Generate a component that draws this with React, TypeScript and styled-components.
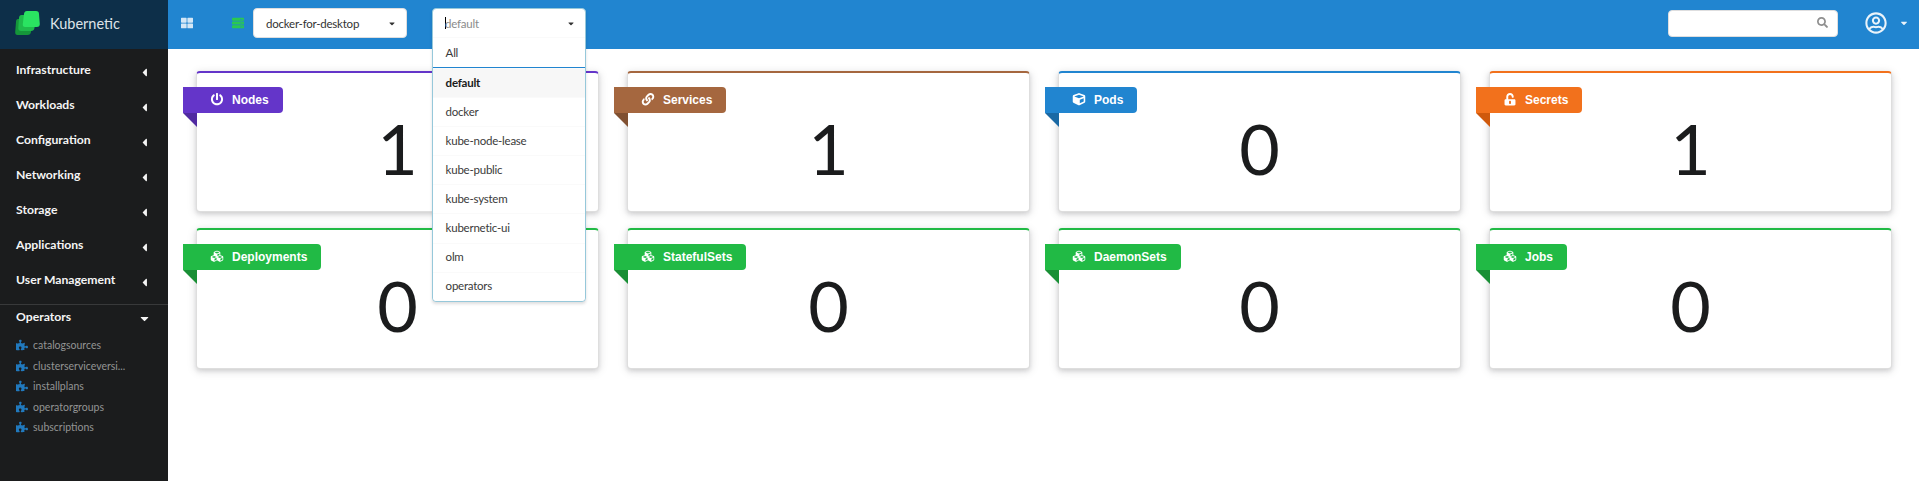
import React from 'react';
import styled, { createGlobalStyle } from 'styled-components';
import type { IconType } from 'react-icons';
import {
  FaCaretDown, FaCaretLeft, FaCube, FaCubes, FaLink, FaPowerOff, FaPuzzlePiece,
  FaRegUserCircle, FaSearch, FaServer, FaThLarge, FaUnlockAlt,
} from 'react-icons/fa';

const Global = createGlobalStyle`
  *, *::before, *::after { box-sizing: border-box; }
  body { margin: 0; background: #fff; font-family: Lato, "Liberation Sans", sans-serif; }
`;

const Page = styled.div`
  display: flex;
  height: 481px;
  overflow: hidden;
`;

const Sidebar = styled.nav`
  flex: none;
  width: 168px;
  background: #1b1c1d;
  color: #f4f4f4;
`;

const Brand = styled.div`
  display: flex;
  align-items: center;
  gap: 9px;
  height: 49px;
  padding: 0 0 3px 14px;
  background: #0d2f49;
  color: #dde3e8;
  font-size: 14.5px;
`;

const Sections = styled.div`
  height: 251px;
  padding-top: 4px;
  border-bottom: 1px solid #38393a;
  box-sizing: content-box;
`;

const SectionRow = styled.div<{ $open?: boolean }>`
  display: flex;
  align-items: center;
  justify-content: space-between;
  height: ${(p) => (p.$open ? '22px' : '35px')};
  padding: 0 19px ${(p) => (p.$open ? '0' : '3px')} 16px;
  font-size: 12.2px;
  font-weight: 700;

  svg {
    width: ${(p) => (p.$open ? '9px' : '13px')};
    height: 13px;
    margin: ${(p) => (p.$open ? '5px 0 0' : '7px -2px 0 0')};
  }
`;

const SubItem = styled.div`
  display: flex;
  align-items: center;
  gap: 5px;
  height: 20.5px;
  padding-left: 16px;
  color: #939494;
  font-size: 10.5px;

  svg { color: #2179bd; width: 12px; height: 12px; }
`;

const SubList = styled.div`
  padding-top: 8px;
`;

const Main = styled.main`
  flex: 1;
  min-width: 0;
`;

const Topbar = styled.header`
  display: flex;
  align-items: flex-start;
  height: 49px;
  padding-left: 13px;
  background: #2185d0;
`;

const BarIcon = styled.span<{ $color: string; $gap: number }>`
  display: flex;
  margin: 17px ${(p) => p.$gap}px 0 0;
  color: ${(p) => p.$color};
`;

const Select = styled.div<{ $open?: boolean }>`
  flex: none;
  position: relative;
  z-index: 2;
  width: 154px;
  height: ${(p) => (p.$open ? '294px' : '30px')};
  margin: 8px 25px 0 0;
  border: 1px solid ${(p) => (p.$open ? '#96c8da' : '#dededf')};
  border-radius: 4px;
  background: #fff;
  box-shadow: ${(p) => (p.$open ? '0 2px 3px rgba(34,36,38,.15)' : 'none')};
  color: rgba(0, 0, 0, .87);
  font-size: 11.5px;
  letter-spacing: -0.23px;
`;

const SelectValue = styled.div<{ $muted?: boolean }>`
  display: flex;
  align-items: center;
  justify-content: space-between;
  height: 28px;
  padding: 0 9px 0 12px;
  color: ${(p) => (p.$muted ? '#8b8b8b' : '#333')};

  svg { color: #333; width: 10px; height: 9px; }
`;

const Caret = styled.span`
  width: 1px;
  height: 12px;
  margin-right: -1px;
  background: #000;
`;

const ValueText = styled.span`
  flex: 1;
`;

const Option = styled.div<{ $selected?: boolean; $first?: boolean }>`
  display: flex;
  align-items: center;
  height: ${(p) => (p.$first ? '31px' : '29.1px')};
  padding: 0 12px ${(p) => (p.$first ? '0' : '2px')} 12.6px;
  border-top: 1px solid #fafafa;
  border-bottom: ${(p) => (p.$first ? '1px solid #2185d0' : '0')};
  background: ${(p) => (p.$selected ? '#f7f7f7' : '#fff')};
  color: ${(p) => (p.$selected ? '#1b1b1b' : '#3a3a3a')};
  font-weight: ${(p) => (p.$selected ? 700 : 400)};

  &:last-child { border-radius: 0 0 4px 4px; }
`;

const Tools = styled.div`
  display: flex;
  align-items: center;
  height: 47px;
  margin-left: auto;
  padding-right: 10px;
  color: #e9f3fa;
`;

const SearchBox = styled.div`
  display: flex;
  align-items: center;
  justify-content: flex-end;
  width: 170px;
  height: 27px;
  margin-right: 27px;
  padding: 0 9px 2px 0;
  border: 1px solid #dededf;
  border-radius: 4px;
  background: #fff;
  color: #8f8f8f;
`;

const UserMenu = styled.span`
  display: flex;
  align-items: center;
  gap: 12px;
  padding-bottom: 2px;
`;

const Grid = styled.div`
  display: grid;
  grid-template-columns: repeat(4, 1fr);
  gap: 16px 28px;
  padding: 22px 27px 0 28px;
`;

const Card = styled.section<{ $color: string }>`
  height: 141px;
  border: 1px solid rgba(34, 36, 38, .15);
  border-top: 2px solid ${(p) => p.$color};
  border-radius: 4px;
  background: #fff;
  box-shadow: 0 2px 4px rgba(34, 36, 38, .12), 0 2px 10px rgba(34, 36, 38, .15);
`;

const Ribbon = styled.div<{ $color: string; $fold: string }>`
  position: relative;
  display: flex;
  align-items: center;
  width: max-content;
  height: 26px;
  margin: 14px 0 0 -14px;
  padding: 0 14px 1px 27px;
  border-radius: 0 4px 4px 0;
  background: ${(p) => p.$color};
  color: #fff;
  font: 700 12px "Liberation Sans", Arial, sans-serif;

  svg { width: 14px; height: 12.5px; margin-right: 8px; }

  &::after {
    content: '';
    position: absolute;
    top: 100%;
    left: 0;
    border-style: solid;
    border-width: 0 14px 14px 0;
    border-color: transparent ${(p) => p.$fold} transparent transparent;
  }
`;

const Count = styled.div`
  color: #1b1c1d;
  font-size: 70px;
  line-height: 70px;
  text-align: center;
`;

const Logo = () => (
  <svg width="27" height="27" viewBox="0 0 27 27">
    <path d="M4 9h11q3 0 3 3l-1 10q-.5 3-3.500 3H3.500Q1 25 1.200 22L2 12q0-3 2-3Z" fill="#15963a" />
    <path d="M7.500 5h11q3 0 3 3l-1 10q-.5 3-3.500 3H7Q4.200 21 4.300 18L5 8q.2-3 2.500-3Z" fill="#1fba4b" />
    <path d="M13 1h9q3 0 3 3l.8 10q0 3-3 3H11q-2.500 0-2.200-3L10 4q.3-3 3-3Z" fill="#2ae361" />
  </svg>
);

const sections = ['Infrastructure', 'Workloads', 'Configuration', 'Networking', 'Storage', 'Applications', 'User Management'];
const operators = ['catalogsources', 'clusterserviceversi...', 'installplans', 'operatorgroups', 'subscriptions'];
const namespaces = ['All', 'default', 'docker', 'kube-node-lease', 'kube-public', 'kube-system', 'kubernetic-ui', 'olm', 'operators'];

interface Stat { name: string; count: number; color: string; fold: string; icon: IconType }

const stats: Stat[] = [
  { name: 'Nodes', count: 1, color: '#6435c9', fold: '#502aa1', icon: FaPowerOff },
  { name: 'Services', count: 1, color: '#a5673f', fold: '#805031', icon: FaLink },
  { name: 'Pods', count: 0, color: '#2185d0', fold: '#1a69a4', icon: FaCube },
  { name: 'Secrets', count: 1, color: '#f2711c', fold: '#cf590c', icon: FaUnlockAlt },
  { name: 'Deployments', count: 0, color: '#21ba45', fold: '#198f35', icon: FaCubes },
  { name: 'StatefulSets', count: 0, color: '#21ba45', fold: '#198f35', icon: FaCubes },
  { name: 'DaemonSets', count: 0, color: '#21ba45', fold: '#198f35', icon: FaCubes },
  { name: 'Jobs', count: 0, color: '#21ba45', fold: '#198f35', icon: FaCubes },
];

export default function App() {
  return (
    <Page>
      <Global />
      <Sidebar>
        <Brand><Logo />Kubernetic</Brand>
        <Sections>
          {sections.map((s) => <SectionRow key={s}>{s}<FaCaretLeft /></SectionRow>)}
        </Sections>
        <SectionRow $open>Operators<FaCaretDown /></SectionRow>
        <SubList>
          {operators.map((o) => <SubItem key={o}><FaPuzzlePiece />{o}</SubItem>)}
        </SubList>
      </Sidebar>
      <Main>
        <Topbar>
          <BarIcon $color="#d3e7f6" $gap={39}><FaThLarge size={12} /></BarIcon>
          <BarIcon $color="#2ac950" $gap={9}><FaServer size={12} /></BarIcon>
          <Select>
            <SelectValue><ValueText>docker-for-desktop</ValueText><FaCaretDown /></SelectValue>
          </Select>
          <Select $open>
            <SelectValue $muted><Caret /><ValueText>default</ValueText><FaCaretDown /></SelectValue>
            {namespaces.map((n) => (
              <Option key={n} $first={n === 'All'} $selected={n === 'default'}>{n}</Option>
            ))}
          </Select>
          <Tools>
            <SearchBox><FaSearch size={11} /></SearchBox>
            <UserMenu><FaRegUserCircle size={22} /><FaCaretDown size={10} /></UserMenu>
          </Tools>
        </Topbar>
        <Grid>
          {stats.map(({ name, count, color, fold, icon: Icon }) => (
            <Card key={name} $color={color}>
              <Ribbon $color={color} $fold={fold}><Icon />{name}</Ribbon>
              <Count>{count}</Count>
            </Card>
          ))}
        </Grid>
      </Main>
    </Page>
  );
}
